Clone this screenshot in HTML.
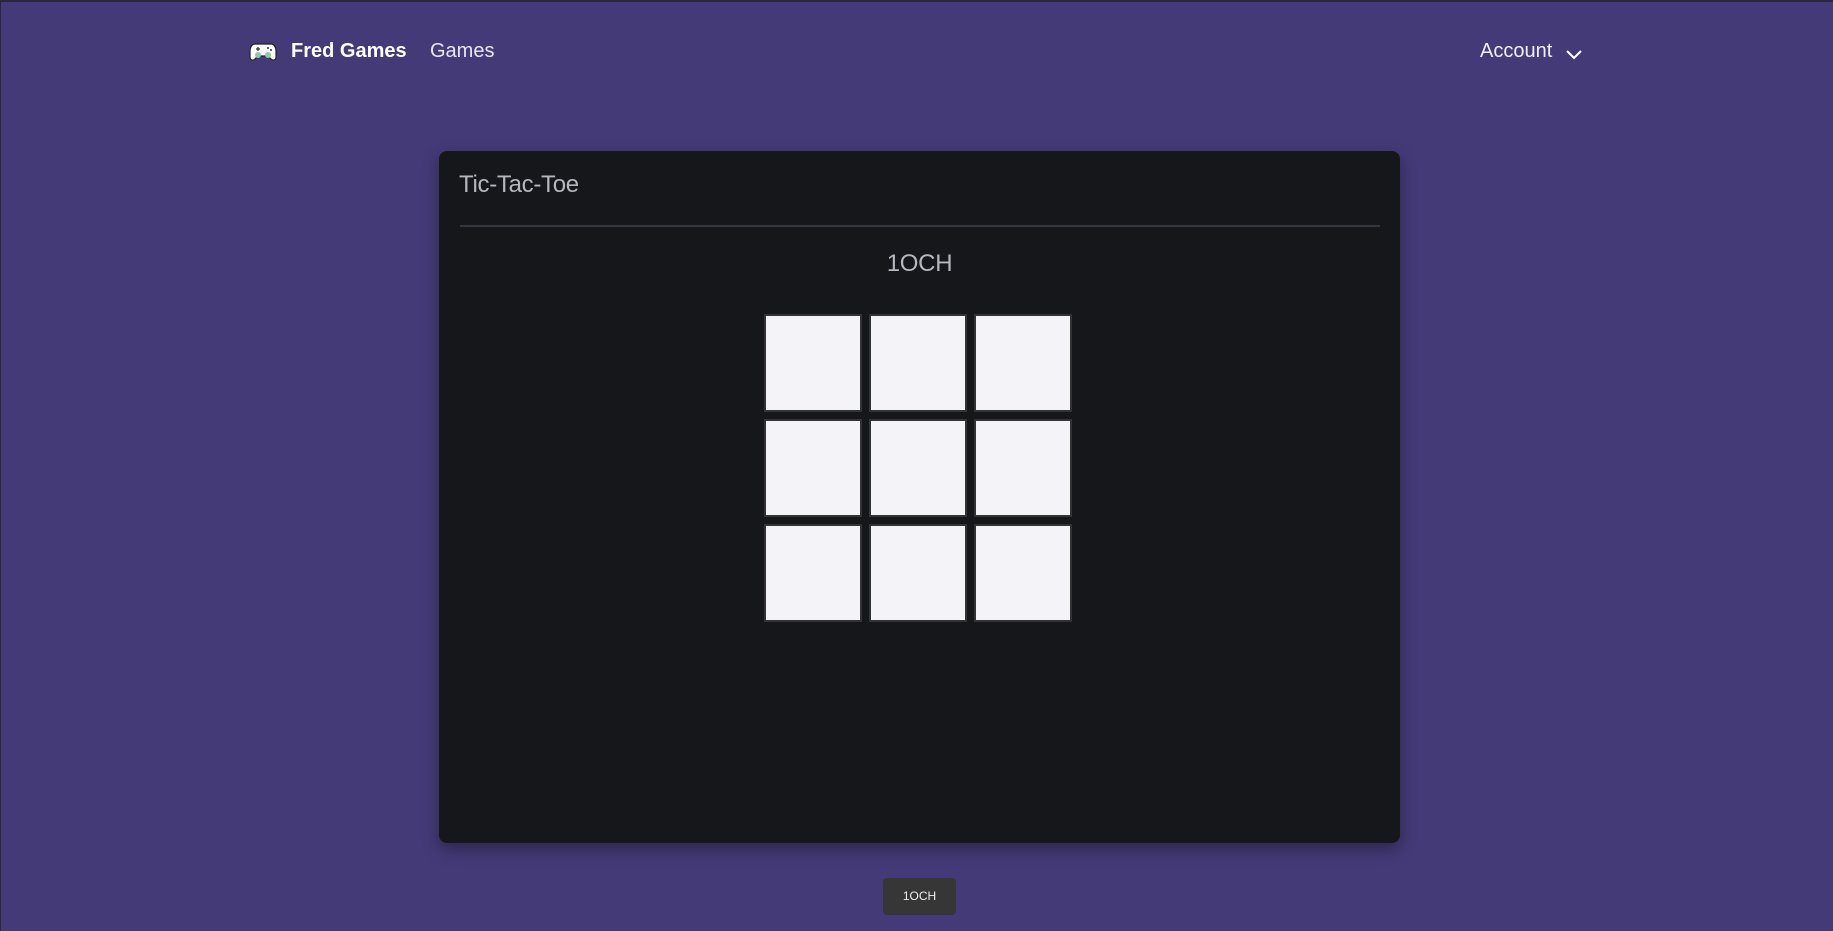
<!DOCTYPE html>
<html><head><meta charset="utf-8"><style>
*{box-sizing:border-box;margin:0;padding:0}
html,body{width:1833px;height:931px;overflow:hidden}
body{background:#443a77;font-family:"Liberation Sans",sans-serif;position:relative;border-top:2px solid #2a2540;border-left:1px solid #2a2540}
.nav{position:absolute;top:0;left:0;width:100%;height:100px}
.logo{position:absolute;left:248px;top:37px}
.brand{position:absolute;left:290px;top:38px;color:#fff;font-weight:bold;font-size:20px}
.games{position:absolute;left:429px;top:38px;color:#e8e6f2;font-size:20px}
.acct{position:absolute;left:1479px;top:38px;color:#f0eef8;font-size:20px}
.chev{position:absolute;left:1564px;top:46px}
.card{position:absolute;left:438px;top:149px;width:961px;height:692px;background:#16171b;border-radius:8px;box-shadow:0 6px 16px rgba(0,0,0,.35)}
.title{position:absolute;left:20px;top:20px;color:#b5b7bf;font-size:24px;letter-spacing:-0.3px}
.sep{position:absolute;left:21px;right:20px;top:74px;height:2px;background:#34373d}
.sub{position:absolute;left:0;width:100%;top:99px;text-align:center;color:#b5b7bf;font-size:24px;letter-spacing:-0.3px}
.grid{position:absolute;left:325px;top:163px;width:310px;display:grid;grid-template-columns:repeat(3,98px);gap:7px}
.cell{width:98px;height:98px;background:#f4f4f8;border:2px solid #333}
.btn{position:absolute;left:882px;top:876px;width:73px;height:37px;background:#363636;border-radius:4px;color:#eee;font-size:12px;text-align:center;line-height:37px}
</style></head><body>
<div class="nav">
<svg class="logo" width="28" height="24" viewBox="0 0 28 24"><path d="M6 5h16c3 0 5 3 5 7v6c0 3-3 4-5 2l-3-3H9l-3 3c-2 2-5 1-5-2v-6c0-4 2-7 5-7z" fill="#fafafa" stroke="#222" stroke-width="1.2"/><circle cx="9" cy="16" r="3" fill="#8fc9a8"/><circle cx="19" cy="16" r="3" fill="#8fc9a8"/><path d="M7 10h4M9 8v4" stroke="#333" stroke-width="1.3"/><circle cx="19" cy="9" r="1" fill="#333"/><circle cx="22" cy="11" r="1" fill="#333"/></svg>
<div class="brand">Fred Games</div>
<div class="games">Games</div>
<div class="acct">Account</div>
<svg class="chev" width="18" height="12" viewBox="0 0 18 12"><path d="M2 3l7 7 7-7" fill="none" stroke="#fff" stroke-width="2"/></svg>
</div>
<div class="card">
<div class="title">Tic-Tac-Toe</div>
<div class="sep"></div>
<div class="sub">1OCH</div>
<div class="grid">
<div class="cell"></div><div class="cell"></div><div class="cell"></div>
<div class="cell"></div><div class="cell"></div><div class="cell"></div>
<div class="cell"></div><div class="cell"></div><div class="cell"></div>
</div>
</div>
<div class="btn">1OCH</div>
</body></html>
